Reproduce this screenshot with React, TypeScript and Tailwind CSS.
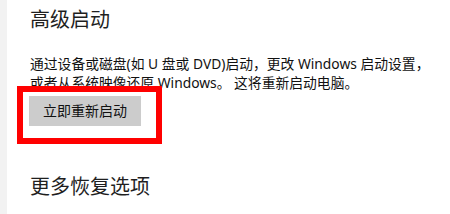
import React from 'react';

const font = { fontFamily: '"Noto Sans", "Noto Sans CJK SC", sans-serif' };

export default function App() {
  return (
    <div className="flex w-[450px] h-[214px] bg-white overflow-hidden" style={font}>
      {/* Left rail */}
      <div className="w-[7px] shrink-0 bg-[#f2f2f2]" />

      <div className="flex flex-col pl-[23px] pt-[6px]">
        <h2 className="text-[20px] leading-[28px] text-[#1f1f1f] font-normal">高级启动</h2>

        <p className="mt-[20px] text-[13.8px] leading-[19px] text-[#111] whitespace-nowrap">
          通过设备或磁盘(如 U 盘或 DVD)启动，更改 Windows 启动设置，
          <br />
          或者从系统映像还原 Windows。 这将重新启动电脑。
        </p>

        {/* Highlighted button */}
        <div className="self-start -ml-[13px] mt-[-6px] border-[6px] border-[#ff0000] pt-[4px] pl-[6px] pr-[15px] pb-[12px]">
          <button className="w-[112px] h-[30px] bg-[#cccccc] text-[14px] text-[#111] leading-none">
            立即重新启动
          </button>
        </div>

        <h2 className="mt-[29px] text-[20px] leading-[28px] text-[#1f1f1f] font-normal">更多恢复选项</h2>
      </div>
    </div>
  );
}
